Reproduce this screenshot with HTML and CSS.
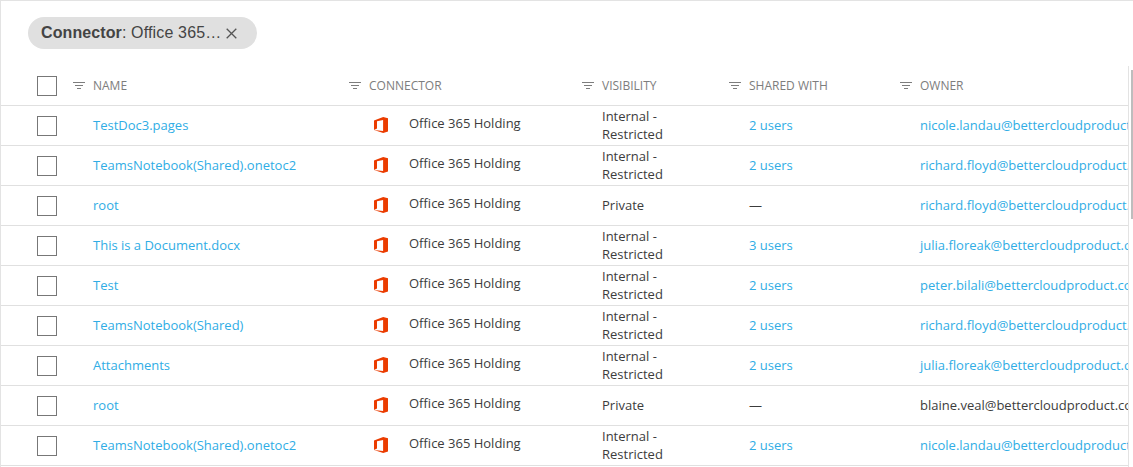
FILE: index.html
```html
<!DOCTYPE html>
<html lang="en">
<head>
<meta charset="utf-8">
<title>Files</title>
<link rel="stylesheet" href="styles.css">
</head>
<body>
<svg class="defs" width="0" height="0" aria-hidden="true">
  <symbol id="f" viewBox="0 0 12 9"><path shape-rendering="crispEdges" d="M0 1h12v1H0zM2 4h8v1H2zM4 7h4v1H4z"/></symbol>
  <symbol id="o" viewBox="0 0 14 17" preserveAspectRatio="none"><path fill-rule="evenodd" d="M9.2 0 14 1.4v14.1L9.2 17 0 13.7 9.1 14.8V3.1L3 4.5v7.6L0 13.7V3.7z"/></symbol>
</svg>
<main class="panel">
  <div class="filters">
    <div class="chip"><span class="chip-text"><b>Connector</b>: Office 365…</span><svg class="chip-x" viewBox="0 0 11 11"><path d="M.7.7l9.6 9.6M10.3.7.7 10.3"/></svg></div>
  </div>
  <div class="table">
    <div class="row head">
      <div class="c-check"><span class="box"></span></div>
      <div class="th"><svg class="fi"><use href="#f"/></svg>NAME</div>
      <div class="th th-in"><svg class="fi"><use href="#f"/></svg>CONNECTOR</div>
      <div class="th th-in"><svg class="fi"><use href="#f"/></svg>VISIBILITY</div>
      <div class="th"><svg class="fi"><use href="#f"/></svg>SHARED WITH</div>
      <div class="th"><svg class="fi"><use href="#f"/></svg>OWNER</div>
    </div>
    <div class="row">
      <div class="c-check"><span class="box"></span></div>
      <a class="link c-name">TestDoc3.pages</a>
      <div class="c-conn"><svg class="oi"><use href="#o"/></svg><span>Office 365 Holding</span></div>
      <div class="c-vis">Internal - Restricted</div>
      <a class="link c-shared">2 users</a>
      <a class="link c-owner">nicole.landau@bettercloudproduct.com</a>
    </div>
    <div class="row">
      <div class="c-check"><span class="box"></span></div>
      <a class="link c-name">TeamsNotebook(Shared).onetoc2</a>
      <div class="c-conn"><svg class="oi"><use href="#o"/></svg><span>Office 365 Holding</span></div>
      <div class="c-vis">Internal - Restricted</div>
      <a class="link c-shared">2 users</a>
      <a class="link c-owner">richard.floyd@bettercloudproduct.com</a>
    </div>
    <div class="row">
      <div class="c-check"><span class="box"></span></div>
      <a class="link c-name">root</a>
      <div class="c-conn"><svg class="oi"><use href="#o"/></svg><span>Office 365 Holding</span></div>
      <div class="c-vis">Private</div>
      <div class="c-shared">—</div>
      <a class="link c-owner">richard.floyd@bettercloudproduct.com</a>
    </div>
    <div class="row">
      <div class="c-check"><span class="box"></span></div>
      <a class="link c-name">This is a Document.docx</a>
      <div class="c-conn"><svg class="oi"><use href="#o"/></svg><span>Office 365 Holding</span></div>
      <div class="c-vis">Internal - Restricted</div>
      <a class="link c-shared">3 users</a>
      <a class="link c-owner">julia.floreak@bettercloudproduct.com</a>
    </div>
    <div class="row">
      <div class="c-check"><span class="box"></span></div>
      <a class="link c-name">Test</a>
      <div class="c-conn"><svg class="oi"><use href="#o"/></svg><span>Office 365 Holding</span></div>
      <div class="c-vis">Internal - Restricted</div>
      <a class="link c-shared">2 users</a>
      <a class="link c-owner">peter.bilali@bettercloudproduct.com</a>
    </div>
    <div class="row">
      <div class="c-check"><span class="box"></span></div>
      <a class="link c-name">TeamsNotebook(Shared)</a>
      <div class="c-conn"><svg class="oi"><use href="#o"/></svg><span>Office 365 Holding</span></div>
      <div class="c-vis">Internal - Restricted</div>
      <a class="link c-shared">2 users</a>
      <a class="link c-owner">richard.floyd@bettercloudproduct.com</a>
    </div>
    <div class="row">
      <div class="c-check"><span class="box"></span></div>
      <a class="link c-name">Attachments</a>
      <div class="c-conn"><svg class="oi"><use href="#o"/></svg><span>Office 365 Holding</span></div>
      <div class="c-vis">Internal - Restricted</div>
      <a class="link c-shared">2 users</a>
      <a class="link c-owner">julia.floreak@bettercloudproduct.com</a>
    </div>
    <div class="row">
      <div class="c-check"><span class="box"></span></div>
      <a class="link c-name">root</a>
      <div class="c-conn"><svg class="oi"><use href="#o"/></svg><span>Office 365 Holding</span></div>
      <div class="c-vis">Private</div>
      <div class="c-shared">—</div>
      <div class="c-owner">blaine.veal@bettercloudproduct.com</div>
    </div>
    <div class="row">
      <div class="c-check"><span class="box"></span></div>
      <a class="link c-name">TeamsNotebook(Shared).onetoc2</a>
      <div class="c-conn"><svg class="oi"><use href="#o"/></svg><span>Office 365 Holding</span></div>
      <div class="c-vis">Internal - Restricted</div>
      <a class="link c-shared">2 users</a>
      <a class="link c-owner">nicole.landau@bettercloudproduct.com</a>
    </div>
  </div>
  <div class="scrollbar"></div>
</main>
</body>
</html>
```
FILE: styles.css
```css
* { box-sizing: border-box; }
html, body { margin: 0; height: 100%; overflow: hidden; background: #fff; }
body { font: 13px/18px "Open Sans", sans-serif; color: #3c3c3c; }
.defs { display: block; height: 0; }
.panel { position: relative; height: 467px; width: 1133px; border-top: 1px solid #e3e3e3; border-left: 1px solid #e3e3e3; overflow: hidden; }
.filters { height: 65px; padding: 16px 0 0 27px; }
.chip { display: inline-flex; align-items: center; height: 32px; width: 229px; padding: 0 13px; border-radius: 16px; background: #e0e0e0; font: 16px/32px "Liberation Sans", sans-serif; color: #444; }
.chip b { letter-spacing: .1px; }
.chip-text { flex: none; white-space: nowrap; letter-spacing: .15px; }
.chip-x { flex: none; width: 11px; height: 11px; margin-left: 5px; fill: none; stroke: #555; stroke-width: 1.3; }
.table { width: 1128px; height: 401px; border-right: 1px solid #e3e3e3; overflow: hidden; }
.row { display: grid; grid-template-columns: 72px 275px 233px 148px 171px 1fr; height: 40px; align-items: center; border-bottom: 1px solid #e0e0e0; }
.head { color: #7d7d7d; font-size: 12px; }
.c-check { padding-left: 36px; height: 20px; }
.box { display: block; width: 20px; height: 20px; border: 1px solid #777; background: #fff; }
.th { display: flex; align-items: center; white-space: nowrap; }
.th-in { padding-left: 1px; }
.fi { flex: none; width: 12px; height: 9px; margin-right: 8px; fill: #7d7d7d; }
.link { color: #30ade5; white-space: nowrap; overflow: hidden; }
.c-name { padding: 0 0 2px 20px; }
.c-conn { display: flex; align-items: center; padding-left: 26px; color: #3c3c3c; white-space: nowrap; }
.c-conn span { margin-left: 21px; position: relative; top: -2px; padding-bottom: 2px; }
.oi { flex: none; width: 14px; height: 16px; margin-bottom: 1px; fill: #eb3c00; }
.c-vis { width: 111px; padding: 0 0 2px 21px; }
.c-shared { padding: 0 0 2px 20px; }
.c-owner { padding: 0 0 2px 20px; white-space: nowrap; overflow: hidden; }
.scrollbar { position: absolute; top: 69px; right: 0; width: 2px; height: 149px; background: #bdbdbd; }
```
